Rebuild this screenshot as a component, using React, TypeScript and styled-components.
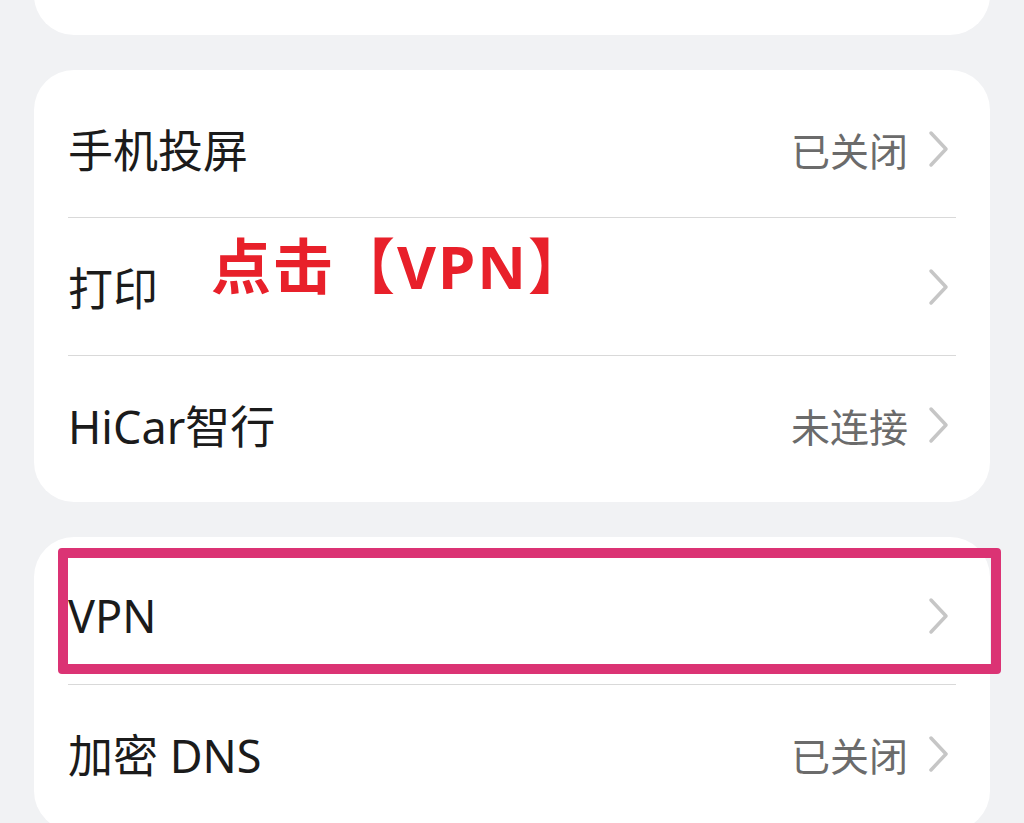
import React from 'react';
import styled, { createGlobalStyle } from 'styled-components';

const GlobalStyle = createGlobalStyle`
    html, body {
        margin: 0;
        padding: 0;
        background: #f1f2f4;
        font-family: "Noto Sans", "Noto Sans CJK SC", sans-serif;
        overflow: hidden;
    }
`;

// the list is scrolled a little: the first card is cut off at the top
const Screen = styled.div`
    width: 1024px;
    height: 823px;
    overflow: hidden;
`;

const Scroller = styled.div`
    display: flex;
    flex-direction: column;
    gap: 35px;
    padding: 0 34px;
    margin-top: -65px;
`;

const Card = styled.div<{ minHeight?: number }>`
    background: #ffffff;
    border-radius: 40px;
    padding: 10px 34px 9px;
    min-height: ${({ minHeight }) => (minHeight ? `${minHeight}px` : 'auto')};
    box-sizing: border-box;
`;

const Row = styled.div`
    position: relative;
    display: flex;
    align-items: center;
    height: 137px;
    border-bottom: 1px solid #d9d9d9;

    &:last-child {
        border-bottom: none;
    }
`;

const Title = styled.div`
    flex: 1;
    font-size: 45px;
    color: #1b1b1b;
`;

const Value = styled.div`
    font-size: 39px;
    color: #6b6b6b;
    margin-right: 20px;
`;

const Chevron = styled.svg`
    width: 22px;
    height: 38px;
    margin-right: 6px;
`;

const Annotation = styled.div`
    position: absolute;
    left: 143px;
    top: 18px;
    font-family: "Noto Sans", "Noto Sans CJK SC", sans-serif;
    font-weight: 700;
    font-size: 60px;
    line-height: 1;
    letter-spacing: 2px;
    color: #e8202a;
    white-space: nowrap;
`;

const Highlight = styled.div`
    position: absolute;
    left: -10px;
    right: -45px;
    top: 1px;
    bottom: 10px;
    border: 10px solid #db3374;
    border-radius: 4px;
    pointer-events: none;
`;

const Arrow = () => (
    <Chevron viewBox="0 0 22 38">
        <path
            d="M3 3 L18 19 L3 35"
            fill="none"
            stroke="#c6c6c6"
            strokeWidth="3.5"
            strokeLinecap="round"
            strokeLinejoin="round"
        />
    </Chevron>
);

interface ISettingRowProps {
    title: string;
    value?: string;
    children?: React.ReactNode;
}

const SettingRow: React.FunctionComponent<ISettingRowProps> = ({
    title,
    value,
    children,
}) => (
    <Row>
        <Title>{title}</Title>
        {value && <Value>{value}</Value>}
        <Arrow />
        {children}
    </Row>
);

export default function App() {
    return (
        <Screen>
            <GlobalStyle />
            <Scroller>
                <Card minHeight={100} />
                <Card>
                    <SettingRow title="手机投屏" value="已关闭" />
                    <SettingRow title="打印">
                        <Annotation>点击【VPN】</Annotation>
                    </SettingRow>
                    <SettingRow title="HiCar智行" value="未连接" />
                </Card>
                <Card>
                    <SettingRow title="VPN">
                        <Highlight />
                    </SettingRow>
                    <SettingRow title="加密 DNS" value="已关闭" />
                </Card>
            </Scroller>
        </Screen>
    );
}
